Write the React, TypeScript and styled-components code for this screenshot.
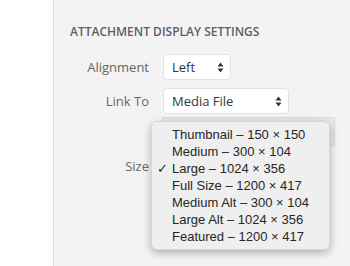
import React from "react";
import styled, { createGlobalStyle } from "styled-components";

const GlobalStyle = createGlobalStyle`
  html, body {
    margin: 0;
    padding: 0;
    background: #fff;
  }
  body {
    font-family: "Open Sans", "Liberation Sans", sans-serif;
  }
`;

const Page = styled.div`
  display: flex;
  width: 350px;
  height: 266px;
  overflow: hidden;
`;

const Gutter = styled.div`
  width: 53px;
  background: #fff;
`;

const Panel = styled.div`
  position: relative;
  flex: 1;
  background: #f3f3f3;
  border-left: 1px solid #dcdcdc;
  padding: 24px 0 0 16px;
`;

const Title = styled.h2`
  margin: 0 0 14px;
  font-size: 12px;
  font-weight: 600;
  line-height: 16px;
  color: #5e5e5e;
  text-transform: uppercase;
`;

const Row = styled.div<{ $gap?: number }>`
  display: flex;
  align-items: center;
  gap: 14px;
  margin-top: ${(p) => p.$gap ?? 8}px;
`;

const Label = styled.span`
  width: 79px;
  text-align: right;
  font-size: 13px;
  color: #666;
`;

const Select = styled.div<{ $width: number }>`
  box-sizing: border-box;
  display: flex;
  align-items: center;
  justify-content: space-between;
  width: ${(p) => p.$width}px;
  height: 26px;
  padding: 0 6px 0 8px;
  background: #fff;
  border: 1px solid #e2e2e2;
  border-radius: 4px;
  font-size: 13px;
  color: #32373c;
`;

const UrlInput = styled.div`
  box-sizing: border-box;
  margin-left: 92px;
  width: 173px;
  height: 30px;
  background: #e8e8e8;
  border: 1px solid #dadada;
  border-bottom: none;
`;

const Menu = styled.ul`
  position: absolute;
  left: 97px;
  top: 121px;
  box-sizing: border-box;
  width: 179px;
  margin: 0;
  padding: 4px 0;
  list-style: none;
  background: #efefef;
  border: 1px solid #d6d6d6;
  border-radius: 6px;
  box-shadow: 0 3px 8px rgba(0, 0, 0, 0.28);
  font-family: "Liberation Sans", Arial, sans-serif;
  font-size: 13px;
  color: #262626;
`;

const Item = styled.li`
  position: relative;
  height: 17px;
  line-height: 17px;
  padding-left: 20px;
  white-space: nowrap;
`;

const Check = styled.span`
  position: absolute;
  left: 5px;
  top: 0;
  font-size: 13px;
  font-weight: bold;
  font-family: "DejaVu Sans", sans-serif;
`;

const Arrows = () => (
  <svg width="7" height="11" viewBox="0 0 7 11">
    <path d="M3.5 0.5 L6.5 4.5 H0.5 Z" fill="#333" />
    <path d="M3.5 10.5 L6.5 6.5 H0.5 Z" fill="#333" />
  </svg>
);

const sizes = [
  "Thumbnail – 150 × 150",
  "Medium – 300 × 104",
  "Large – 1024 × 356",
  "Full Size – 1200 × 417",
  "Medium Alt – 300 × 104",
  "Large Alt – 1024 × 356",
  "Featured – 1200 × 417",
];

export default function App() {
  return (
    <Page>
      <GlobalStyle />
      <Gutter />
      <Panel>
        <Title>Attachment Display Settings</Title>
        <Row $gap={0}>
          <Label>Alignment</Label>
          <Select $width={68}>
            Left
            <Arrows />
          </Select>
        </Row>
        <Row>
          <Label>Link To</Label>
          <Select $width={126}>
            Media File
            <Arrows />
          </Select>
        </Row>
        <Row $gap={3}>
          <UrlInput />
        </Row>
        <Row $gap={6}>
          <Label>Size</Label>
          {/* hidden beneath the open popup menu */}
          <Select $width={126} />
        </Row>
        <Menu>
          {sizes.map((s) => (
            <Item key={s}>
              {s === "Large – 1024 × 356" && <Check>✓</Check>}
              {s}
            </Item>
          ))}
        </Menu>
      </Panel>
    </Page>
  );
}
